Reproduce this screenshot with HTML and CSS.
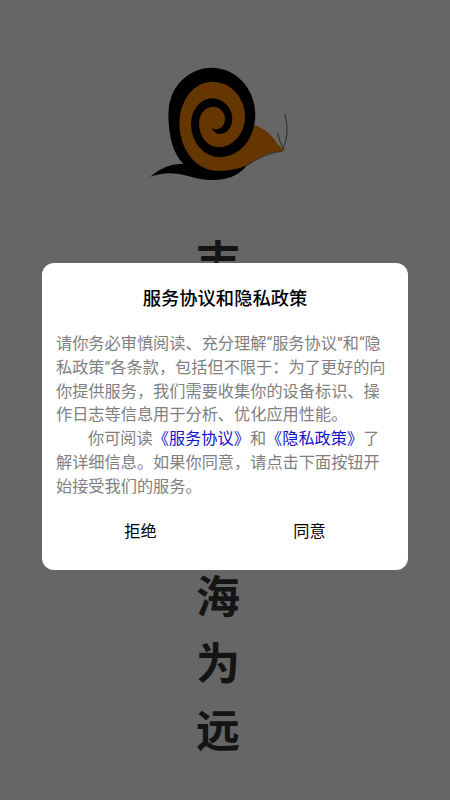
FILE: index.html
```html
<!DOCTYPE html>
<html lang="zh-CN">
<head>
<meta charset="utf-8">
<title>服务协议和隐私政策</title>
<link rel="stylesheet" href="styles.css">
</head>
<body>
<main class="splash">
  <svg class="logo" viewBox="0 0 570 420" width="190" height="140" aria-label="蜗牛">
    <ellipse class="shell-fill" cx="250" cy="220" rx="120" ry="150"/>
    <path class="body-fill" d="M340 210 L372 224 Q410 238 432 266 Q442 284 452 291 Q462 296 458 303 Q415 306 380 328 Q345 355 290 368 L240 300 Z"/>
    <path class="spiral" d="M245 232 Q252 252 268 252 A39 44 0 0 0 307 208 A60 63 0 0 0 247 145 A64 77 0 0 0 183 222 A87 100 0 0 0 270 322 A106 127 0 0 0 376 195 A131 142 0 0 0 245 53 A130 137 0 0 0 115 190 C115 255 128 310 160 342 Q110 338 60 380 Q115 360 175 378 Q225 395 280 388 Q325 380 352 345 Q310 365 260 362 A112 142 0 0 1 148 220 A100 125 0 0 1 248 95 A97 105 0 0 1 345 200 A80 92 0 0 1 265 292 A58 72 0 0 1 207 220 A43 50 0 0 1 250 170 A35 38 0 0 1 285 208 A27 30 0 0 1 258 238 Q248 238 245 232 Z"/>
    <path class="feeler" d="M459 293 Q449 278 443 248 M460 293 Q480 250 465 193"/>
    <path class="outline" d="M352 345 Q400 312 458 303"/>
    <circle class="nose" cx="461" cy="297" r="4"/>
  </svg>
  <div class="motto">
    <span>志</span>
    <div class="motto-hidden"></div>
    <span>海</span><span>为</span><span>远</span>
  </div>
</main>
<div class="overlay">
  <section class="dialog">
    <h1 class="title">服务协议和隐私政策</h1>
    <div class="content">
      <p>请你务必审慎阅读、充分理解“服务协议”和“隐<br>私政策”各条款，包括但不限于：为了更好的向<br>你提供服务，我们需要收集你的设备标识、操<br>作日志等信息用于分析、优化应用性能。</p>
      <p class="indent">你可阅读<a class="link">《服务协议》</a>和<a class="link">《隐私政策》</a>了<br>解详细信息。如果你同意，请点击下面按钮开<br>始接受我们的服务。</p>
    </div>
    <div class="actions">
      <button class="action">拒绝</button>
      <button class="action">同意</button>
    </div>
  </section>
</div>
</body>
</html>
```
FILE: styles.css
```css
* { box-sizing: border-box; }
html, body { margin: 0; height: 100%; }
body {
  width: 450px;
  height: 800px;
  overflow: hidden;
  background: #fff;
  font-family: "Roboto", "Noto Sans CJK SC", sans-serif;
}
.splash {
  display: flex;
  flex-direction: column;
  align-items: center;
  padding-top: 50px;
}
.logo { display: block; }
.shell-fill, .body-fill { fill: #ff8800; }
.spiral { fill: #000; }
.feeler { fill: none; stroke: #222; stroke-width: 2; }
.outline { fill: none; stroke: #000; stroke-width: 1.5; }
.nose { fill: #ff8800; }
.motto {
  display: flex;
  flex-direction: column;
  align-items: center;
  margin: 36px 14px 0 0;
  color: #333;
  font-family: "Noto Sans CJK SC", sans-serif;
  font-size: 44px;
  font-weight: 700;
  line-height: 67px;
}
.motto-hidden { height: 268px; }
.overlay {
  position: fixed;
  inset: 0;
  padding: 263px 42px 0;
  background: rgba(0, 0, 0, 0.6);
}
.dialog {
  width: 366px;
  height: 307px;
  padding-top: 23px;
  background: #fff;
  border-radius: 12px;
}
.title {
  margin: 0;
  color: #000;
  font-size: 18.3px;
  font-weight: 500;
  line-height: 26px;
  text-align: center;
}
.content {
  padding: 20px 14px 0;
  color: #808080;
  font-size: 16.2px;
  line-height: 23.8px;
  white-space: nowrap;
}
.content p { margin: 0; }
.indent { text-indent: 32px; }
.link { color: #1414c8; }
.actions {
  display: flex;
  margin-top: 8px;
  padding: 0 14px;
}
.action {
  flex: 1;
  height: 46px;
  padding: 0;
  border: 0;
  background: none;
  color: #000;
  font: inherit;
  font-size: 16.2px;
}
```
